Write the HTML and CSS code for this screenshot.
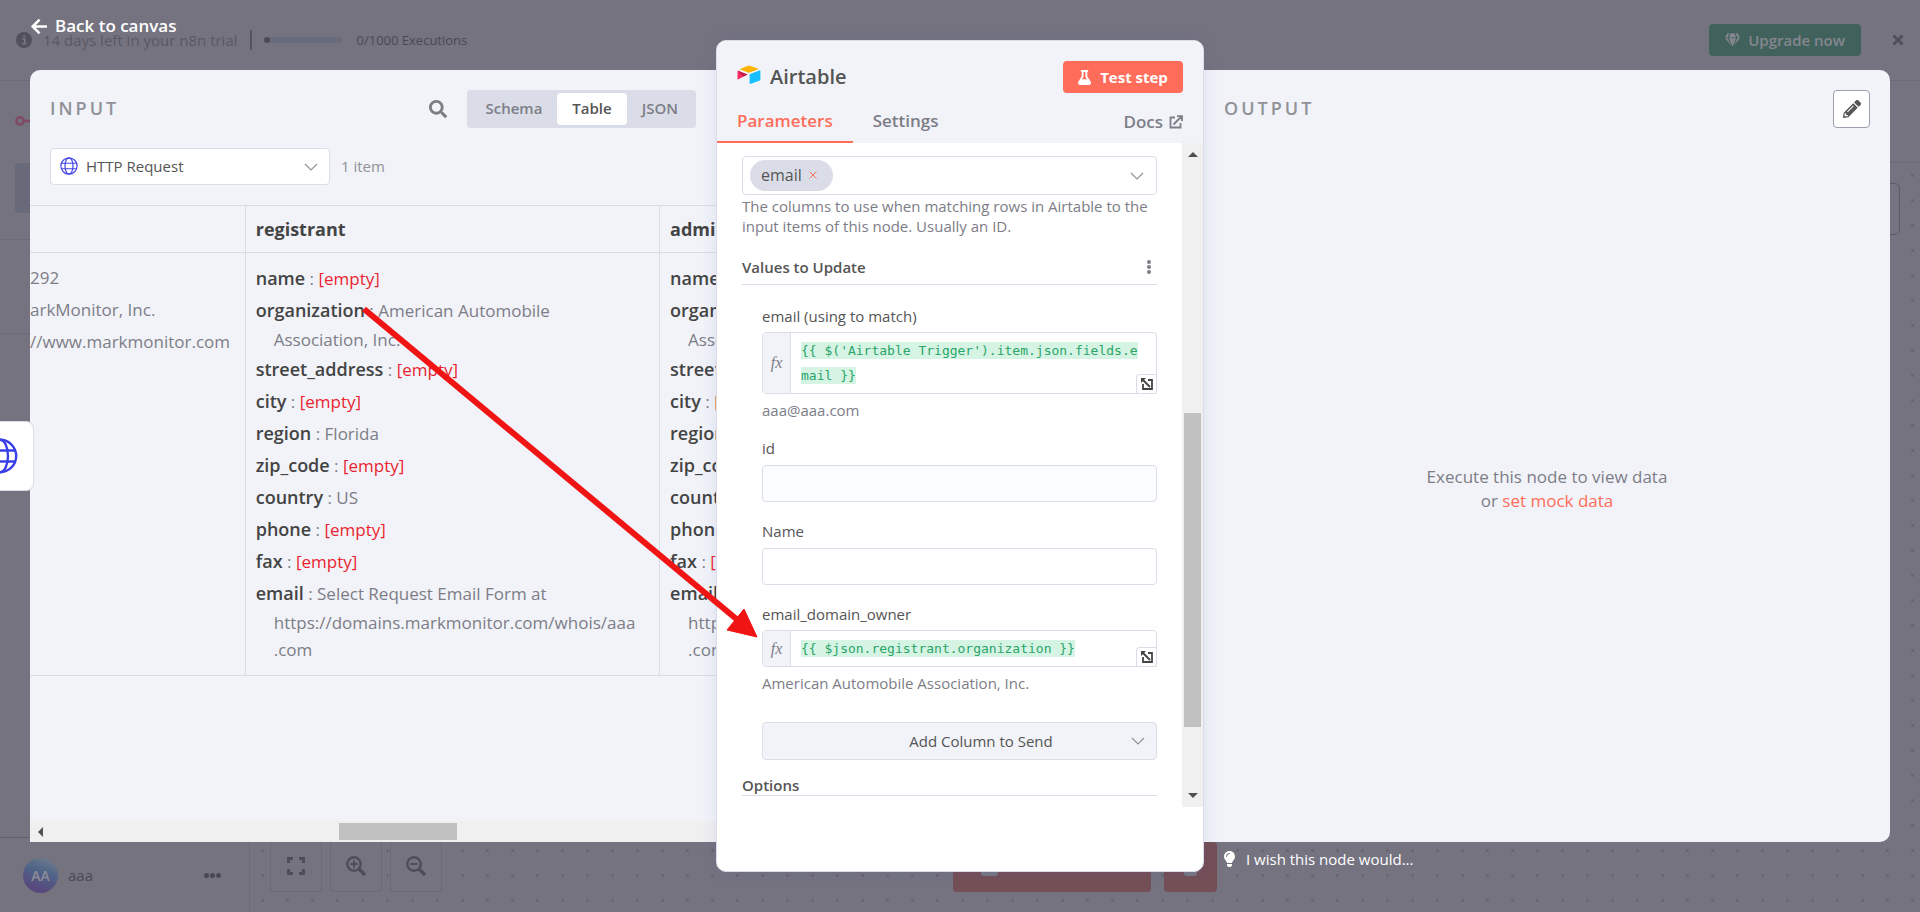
FILE: index.html
```
<!DOCTYPE html>
<html lang="en">
<head>
<meta charset="utf-8">
<title>Airtable - n8n</title>
<link rel="stylesheet" href="styles.css">
</head>
<body>
<svg class="defs" aria-hidden="true">
  <symbol id="globe" viewBox="0 0 36 36"><g fill="none" stroke="currentColor" stroke-width="2.4"><circle cx="18" cy="18" r="16.2"/><ellipse cx="18" cy="18" rx="8" ry="16.2"/><path d="M3 12.5h30M3 23.5h30"/></g></symbol>
  <symbol id="chevron" viewBox="0 0 14 8"><path d="M1 1l6 6 6-6" fill="none" stroke="currentColor" stroke-width="1.2"/></symbol>
  <symbol id="expand" viewBox="0 0 14 14"><path d="M3 3L10 10M3 7v5h9V3H8" fill="none" stroke="currentColor" stroke-width="1.8"/><path d="M1 1h5L1 6z" fill="currentColor"/></symbol>
</svg>

<div class="app">
  <header class="banner">
    <svg class="banner-info" viewBox="0 0 16 16"><circle cx="8" cy="8" r="8" fill="currentColor"/><path d="M6.200 6.800h2.600v4.400M6 11.600h4.200M7.200 4.100h1.900" stroke="#75737f" stroke-width="1.700" fill="none"/></svg>
    <span class="banner-text">14 days left in your n8n trial</span>
    <span class="banner-divider"></span>
    <span class="banner-bar"><i></i></span>
    <span class="banner-count">0/1000 Executions</span>
    <button class="upgrade"><svg viewBox="0 0 576 512"><path fill="currentColor" d="M485.500 0L576 160H474.900L405.700 0h79.800zm-128 0l69.200 160H149.300L218.500 0h139zm-267 0h79.800l-69.200 160H0L90.500 0zM0 192h100.700l123 251.700c1.500 3.100-2.700 5.900-5 3.300L0 192zm148.200 0h279.600l-137 318.200c-1 2.400-4.500 2.400-5.500 0L148.200 192zm204.100 251.700l123-251.700H576L357.300 446.900c-2.300 2.700-6.500-.1-5-3.200z"/></svg>Upgrade now</button>
    <button class="dismiss" aria-label="Dismiss"><svg viewBox="0 0 12 12"><path d="M1.500 1.500l9 9M10.500 1.500l-9 9" stroke="currentColor" stroke-width="3"/></svg></button>
  </header>
  <div class="workspace">
    <nav class="sidebar">
      <div class="brand"><svg viewBox="0 0 20 12"><circle cx="5" cy="6" r="3.600" fill="none" stroke="currentColor" stroke-width="2.600"/><path d="M9 6h11" stroke="currentColor" stroke-width="2.600"/></svg></div>
      <div class="side-top"><span class="side-item"></span></div>
      <div class="side-mid"></div>
      <div class="side-fill"></div>
      <div class="user">
        <span class="avatar">AA</span><span class="user-name">aaa</span>
        <button class="more" aria-label="User menu"><i></i><i></i><i></i></button>
      </div>
    </nav>
    <main class="canvas">
      <div class="canvas-head"></div>
      <div class="canvas-grid">
        <div class="canvas-box"></div>
        <div class="canvas-tools">
          <button class="tool" aria-label="Fit view"><svg viewBox="0 0 20 20"><path d="M2.500 7V2.500H7M13 2.500h4.500V7M17.500 13v4.500H13M7 17.500H2.500V13" fill="none" stroke="currentColor" stroke-width="3"/></svg></button>
          <button class="tool" aria-label="Zoom in"><svg viewBox="0 0 20 20"><g fill="none" stroke="currentColor"><circle cx="8" cy="8" r="6.700" stroke-width="2.400"/><path d="M13 13l6 6" stroke-width="3.400"/><path d="M4.500 8h7M8 4.500v7" stroke-width="2"/></g></svg></button>
          <button class="tool" aria-label="Zoom out"><svg viewBox="0 0 20 20"><g fill="none" stroke="currentColor"><circle cx="8" cy="8" r="6.700" stroke-width="2.400"/><path d="M13 13l6 6" stroke-width="3.400"/><path d="M4.500 8h7" stroke-width="2"/></g></svg></button>
        </div>
        <div class="canvas-run"><button class="run wide" aria-label="Test workflow"><i></i></button><button class="run" aria-label="Delete execution"><i></i></button></div>
      </div>
    </main>
  </div>
</div>

<div class="ndv">
  <div class="ndv-top"><button class="back"><svg viewBox="0 0 16 16"><path d="M9 1.500L2.500 8 9 14.500M2.500 8H16" fill="none" stroke="currentColor" stroke-width="2.400"/></svg>Back to canvas</button></div>
  <div class="ndv-grid">
    <section class="side input">
      <div class="pane">
        <div class="pane-head">
          <h2>INPUT</h2>
          <button class="search" aria-label="Search"><svg viewBox="0 0 512 512"><path fill="currentColor" d="M505 442.700L405.300 343c-4.500-4.500-10.600-7-17-7H372c27.600-35.300 44-79.700 44-128C416 93.100 322.900 0 208 0S0 93.100 0 208s93.100 208 208 208c48.300 0 92.700-16.400 128-44v16.300c0 6.400 2.500 12.500 7 17l99.700 99.700c9.400 9.400 24.600 9.400 33.900 0l28.300-28.300c9.400-9.400 9.400-24.600.1-34zM208 336c-70.700 0-128-57.200-128-128 0-70.700 57.200-128 128-128 70.700 0 128 57.200 128 128 0 70.700-57.200 128-128 128z"/></svg></button>
          <div class="views"><button>Schema</button><button class="on">Table</button><button>JSON</button></div>
        </div>
        <div class="source">
          <div class="picker">
            <svg class="picker-icon"><use href="#globe"/></svg>
            <select aria-label="Input node"><option>HTTP Request</option></select>
            <svg class="chev"><use href="#chevron"/></svg>
          </div>
          <span class="count">1 item</span>
        </div>
        <div class="table-wrap">
          <table>
            <thead><tr><th></th><th>registrant</th><th>administrative</th></tr></thead>
            <tbody><tr>
              <td class="cut"><p>292</p><p>arkMonitor, Inc.</p><p>//www.markmonitor.com</p></td>
              <td>
                <p><b>name</b> : <em>[empty]</em></p>
                <p><b>organization</b> : American Automobile<br>Association, Inc.</p>
                <p><b>street_address</b> : <em>[empty]</em></p>
                <p><b>city</b> : <em>[empty]</em></p>
                <p><b>region</b> : Florida</p>
                <p><b>zip_code</b> : <em>[empty]</em></p>
                <p><b>country</b> : US</p>
                <p><b>phone</b> : <em>[empty]</em></p>
                <p><b>fax</b> : <em>[empty]</em></p>
                <p><b>email</b> : Select Request Email Form at<br>https://domains.markmonitor.com/whois/aaa<br>.com</p>
              </td>
              <td>
                <p><b>name</b> : <em>[empty]</em></p>
                <p><b>organization</b> : American Automobile<br>Association, Inc.</p>
                <p><b>street_address</b> : <em>[empty]</em></p>
                <p><b>city</b> : <em>[empty]</em></p>
                <p><b>region</b> : Florida</p>
                <p><b>zip_code</b> : <em>[empty]</em></p>
                <p><b>country</b> : US</p>
                <p><b>phone</b> : <em>[empty]</em></p>
                <p><b>fax</b> : <em>[empty]</em></p>
                <p><b>email</b> : Select Request Email Form at<br>https://domains.markmonitor.com/whois/aaa<br>.com</p>
              </td>
            </tr></tbody>
          </table>
        </div>
        <div class="hbar"><i class="tri left"></i><span class="track"><i class="thumb"></i></span><i class="tri right"></i></div>
      </div>
    </section>

    <section class="node">
      <header class="node-head">
        <div class="node-title">
          <svg class="logo" viewBox="0 0 24 24"><path d="M2.500 4.200L11 .7q1-.4 2 0l8.800 3.300-8.900 3.500q-1 .4-2 0z" fill="#fcb400"/><path d="M12.600 9.300l10.200-4q.6-.2.600.4v9q0 .5-.5.700L13.100 19q-.5.200-.5-.4z" fill="#18bfff"/><path d="M.6 5.800q.3-.3.700-.1l9.200 3.800L.9 14.600q-.4.200-.4-.3z" fill="#f82b60"/><path d="M10.500 9.500L6.500 11.500.8 5.800z" fill="#ba1e45"/></svg>
          <h1>Airtable</h1>
          <button class="test"><svg viewBox="0 0 448 512"><path fill="currentColor" d="M437.200 403.500L320 215V64h8c13.300 0 24-10.700 24-24V24c0-13.300-10.700-24-24-24H120c-13.300 0-24 10.700-24 24v16c0 13.300 10.700 24 24 24h8v151L10.800 403.500C-18.500 450.600 15.300 512 70.900 512h306.200c55.700 0 89.400-61.500 60.100-108.500zM137.900 320l48.200-77.600c3.700-5.200 5.800-11.600 5.800-18.400V64h64v160c0 6.900 2.200 13.200 5.800 18.400l48.200 77.600h-172z"/></svg>Test step</button>
        </div>
        <nav class="tabs">
          <button class="tab on">Parameters</button><button class="tab">Settings</button>
          <a class="docs" href="#">Docs <svg viewBox="0 0 14 14"><path d="M6 2.500H1.500v10h10V8M4.500 9.500L12 2M8 1.200h5V6" fill="none" stroke="currentColor" stroke-width="1.800"/></svg></a>
        </nav>
      </header>
      <div class="node-body">
        <div class="params">
          <div class="multi">
            <span class="tag">email<button aria-label="Remove email"><svg viewBox="0 0 8 8"><path d="M.5.5l7 7M7.500.5l-7 7" stroke="currentColor"/></svg></button></span>
            <svg class="chev"><use href="#chevron"/></svg>
          </div>
          <p class="help">The columns to use when matching rows in Airtable to the input items of this node. Usually an ID.</p>
          <div class="section"><h3>Values to Update</h3><button class="dots" aria-label="Options"><i></i><i></i><i></i></button></div>
          <div class="fields">
            <div class="field expr-field">
              <span class="label" id="l1">email (using to match)</span>
              <div class="expr"><span class="fx">fx</span><div class="code" role="textbox" aria-labelledby="l1"><mark>{{ $('Airtable Trigger').item.json.fields.e<br>mail }}</mark></div><button class="open" aria-label="Open editor"><svg><use href="#expand"/></svg></button></div>
              <span class="result">aaa@aaa.com</span>
            </div>
            <div class="field"><label for="id">id</label><input id="id" class="muted" type="text"></div>
            <div class="field"><label for="name">Name</label><input id="name" type="text"></div>
            <div class="field expr-field">
              <span class="label" id="l2">email_domain_owner</span>
              <div class="expr"><span class="fx">fx</span><div class="code" role="textbox" aria-labelledby="l2"><mark>{{ $json.registrant.organization }}</mark></div><button class="open" aria-label="Open editor"><svg><use href="#expand"/></svg></button></div>
              <span class="result">American Automobile Association, Inc.</span>
            </div>
            <div class="add"><select aria-label="Add column"><option>Add Column to Send</option></select><svg class="chev"><use href="#chevron"/></svg></div>
          </div>
          <div class="section options"><h3>Options</h3></div>
        </div>
        <div class="vbar"><i class="tri up"></i><span class="track"><i class="thumb"></i></span><i class="tri down"></i></div>
      </div>
    </section>

    <section class="side output">
      <div class="pane">
        <div class="pane-head"><h2>OUTPUT</h2><button class="edit" aria-label="Edit output"><svg viewBox="0 0 512 512"><path fill="currentColor" d="M497.900 142.100l-46.100 46.100c-4.700 4.700-12.300 4.700-17 0l-111-111c-4.700-4.700-4.700-12.300 0-17l46.100-46.100c18.700-18.700 49.100-18.700 67.900 0l60.100 60.100c18.800 18.700 18.800 49.100 0 67.900zM284.200 99.800L21.600 362.400.4 483.900c-2.900 16.400 11.400 30.600 27.800 27.800l121.500-21.300 262.600-262.600c4.700-4.700 4.700-12.300 0-17l-111-111c-4.800-4.700-12.400-4.700-17.100 0zM124.100 339.900c-5.500-5.500-5.500-14.300 0-19.800l154-154c5.500-5.500 14.300-5.500 19.800 0s5.500 14.300 0 19.800l-154 154c-5.500 5.500-14.300 5.500-19.800 0zM88 424h48v36.300l-64.500 11.300-31.100-31.100L51.700 376H88v48z"/></svg></button></div>
        <p class="empty">Execute this node to view data<br>or <a href="#">set mock data</a></p>
      </div>
      <button class="wish"><svg viewBox="0 0 352 512"><path fill="currentColor" d="M96.060 454.350c.01 6.290 1.870 12.450 5.360 17.690l17.090 25.690a31.990 31.990 0 0 0 26.640 14.280h61.710a31.990 31.990 0 0 0 26.640-14.280l17.090-25.690a31.989 31.989 0 0 0 5.360-17.690l.04-38.350H96.010l.05 38.350zM0 176c0 44.370 16.450 84.850 43.560 115.780 16.520 18.850 42.360 58.230 52.210 91.450.04.260.07.520.11.780h160.240c.04-.260.07-.510.11-.780 9.850-33.220 35.690-72.600 52.210-91.450C335.550 260.850 352 220.370 352 176 352 78.610 272.910-.3 175.450 0 73.440.31 0 82.970 0 176zm176-80c-44.110 0-80 35.890-80 80 0 8.840-7.160 16-16 16s-16-7.160-16-16c0-61.760 50.240-112 112-112 8.840 0 16 7.160 16 16s-7.160 16-16 16z"/></svg>I wish this node would...</button>
    </section>
  </div>
  <button class="prev-node" aria-label="HTTP Request"><svg><use href="#globe"/></svg></button>
  <svg class="arrow" width="400" height="340" viewBox="0 0 400 340" aria-hidden="true"><path d="M4 4L380 317" stroke="#f01414" stroke-width="6"/><path d="M397 332L384 304 367 325z" fill="#f01414" stroke="#f01414"/></svg>
</div>
</body>
</html>
```
FILE: styles.css
```
* { box-sizing: border-box; }
body { margin: 0; height: 100vh; overflow: hidden; position: relative; background: #75737f; font: 16px/20px "Open Sans", "Noto Sans", sans-serif; color: #555; }
button { font: inherit; color: inherit; border: 0; padding: 0; margin: 0; background: none; cursor: pointer; }
h1, h2, h3, p { margin: 0; }
svg { display: block; flex: none; }
.defs { position: absolute; width: 0; height: 0; }

/* workflow editor behind the dialog */
.app { height: 100%; display: flex; flex-direction: column; color: #52505d; }
.banner { height: 81px; display: flex; align-items: center; padding: 0 16px; border-bottom: 1px solid #696a7b; }
.banner-info { width: 16px; height: 16px; margin-right: 11px; }
.banner-text { color: #5a5864; font-size: 15px; }
.banner-divider { width: 2px; height: 20px; background: #54535f; margin: 0 12px; }
.banner-bar { width: 78px; height: 6px; border-radius: 3px; background: #696a7a; margin-right: 15px; }
.banner-bar i { display: block; width: 6px; height: 6px; border-radius: 3px; background: #4c4a58; }
.banner-count { font-size: 13px; color: #4a4854; }
.upgrade { margin-left: auto; height: 32px; padding: 0 16px; border-radius: 4px; background: #41625c; color: #85868f; font-size: 15px; font-weight: 600; display: flex; align-items: center; gap: 8px; }
.upgrade svg { width: 15px; height: 14px; }
.dismiss { margin-left: 31px; }
.dismiss svg { width: 12px; height: 12px; }
.workspace { flex: 1; display: flex; min-height: 0; }
.sidebar { width: 250px; flex: none; border-right: 1px solid #6b6a7a; display: flex; flex-direction: column; }
.brand { height: 82px; padding: 34px 15px 0; color: #804c65; }
.brand svg { width: 20px; height: 12px; }
.side-top { height: 77px; padding-left: 15px; border-bottom: 1px solid #696a7b; }
.side-item { display: block; height: 50px; border-radius: 4px; background: #686a79; }
.side-mid { height: 94px; border-bottom: 1px solid #696a7b; }
.side-fill { flex: 1; }
.user { height: 75px; border-top: 1px solid #63616f; display: flex; align-items: center; padding: 0 28px 0 23px; gap: 10px; }
.avatar { width: 35px; height: 35px; border-radius: 50%; background: linear-gradient(200deg, #76808e, #4f6488 40%, #57497c 80%); color: #8d8c97; font-size: 14px; font-weight: 600; line-height: 35px; text-align: center; }
.user-name { font-size: 15px; color: #4c4a54; }
.more { margin-left: auto; display: flex; gap: 1px; }
.more i { width: 5px; height: 5px; border-radius: 50%; background: #4a4855; }
.canvas { flex: 1; min-width: 0; display: flex; flex-direction: column; }
.canvas-head { height: 82px; border-bottom: 1px solid #696a7b; }
.canvas-grid { flex: 1; position: relative; background-image: radial-gradient(circle, #666472 1px, transparent 2px); background-size: 25px 25px; }
.canvas-box { position: absolute; right: 20px; top: 20px; width: 60px; height: 52px; border: 1px solid #5c5a66; border-radius: 5px; }
.canvas-tools { position: absolute; left: 20px; bottom: 20px; display: flex; gap: 8px; }
.tool { width: 52px; height: 52px; border: 1px solid #696978; border-radius: 4px; background: #75737f; color: #4f4d5a; display: grid; place-items: center; }
.tool svg { width: 20px; height: 20px; }
.canvas-run { position: absolute; left: 42%; right: 42%; bottom: 20px; display: flex; justify-content: center; gap: 13px; }
.run { width: 53px; height: 50px; flex: none; border-radius: 4px; background: #744f56; display: flex; align-items: flex-end; padding: 0 20px 16px; }
.run.wide { width: 198px; padding-left: 28px; }
.run i { width: 14px; height: 14px; border-radius: 3px; background: #777885; }
.run.wide i { width: 17px; }

/* node dialog */
.ndv { position: absolute; inset: 0; display: flex; flex-direction: column; padding: 0 30px 40px; }
.ndv-top { height: 40px; display: flex; padding-top: 12px; }
.back { height: 28px; display: flex; align-items: center; gap: 8px; color: #fff; font-size: 17px; font-weight: 600; }
.back svg { width: 17px; height: 17px; }
.ndv-grid { flex: 1; min-height: 0; display: grid; grid-template-columns: minmax(0, 1fr) 488px minmax(0, 1fr); }
.side { display: flex; flex-direction: column; min-width: 0; min-height: 0; padding: 30px 0; }
.output { padding-bottom: 0; }
.pane { flex: 1; min-height: 0; display: flex; flex-direction: column; overflow: hidden; background: #f1f3f8; }
.input .pane { border-radius: 10px 0 0 0; }
.output .pane { border-radius: 0 10px 10px 0; }
.pane-head { display: flex; align-items: center; padding: 20px 20px 0; }
.pane-head h2 { font-size: 18px; font-weight: 600; line-height: 24px; letter-spacing: 3px; color: #909298; margin: 0 auto 2px 0; }
.search { color: #7d7d87; margin-right: 20px; }
.search svg { width: 18px; height: 18px; }
.views { height: 38px; padding: 3px; border-radius: 4px; background: #dadde7; display: flex; }
.views button { padding: 0 15px 2px; border-radius: 4px; font-size: 15px; font-weight: 600; color: #7d7d87; }
.views .on { background: #fff; color: #555; }
.source { display: flex; align-items: center; padding: 20px 20px 0; gap: 11px; }
.picker, .add { position: relative; }
.picker { width: 280px; }
.picker select { appearance: none; width: 100%; height: 37px; padding: 0 35px 2px; border: 1px solid #dadde7; border-radius: 4px; background: #fff; font: inherit; font-size: 15px; color: #555; display: block; }
.picker-icon { position: absolute; left: 10px; top: 9px; width: 18px; height: 18px; color: #4347e6; }
.chev { width: 14px; height: 8px; color: #909298; position: absolute; right: 12px; top: 15px; }
.count { font-size: 15px; color: #909298; padding-bottom: 2px; }
.table-wrap { flex: 1; min-height: 0; overflow: hidden; margin-top: 20px; }
table { border-collapse: collapse; table-layout: fixed; width: 1044px; border-top: 1px solid #dadde7; border-bottom: 1px solid #dadde7; font-size: 17px; line-height: 27px; color: #7d7d87; white-space: nowrap; }
th { width: 414px; height: 47px; padding: 0 10px; text-align: left; font-size: 18px; font-weight: 700; color: #444; border-left: 1px solid #dadde7; border-bottom: 1px solid #dadde7; }
th:first-child { width: 215px; border-left: 0; }
td { vertical-align: top; padding: 9px 10px 12px; border-left: 1px solid #dadde7; }
td.cut { padding-left: 0; padding-right: 0; border-left: 0; }
td p { padding-left: 18px; text-indent: -18px; }
td.cut p { padding-left: 0; text-indent: 0; line-height: 32px; }
td b { display: inline-block; text-indent: 0; font-size: 18px; line-height: 32px; font-weight: 600; color: #444; }
td em { font-style: normal; color: #ea1f30; }
.hbar { height: 21px; flex: none; background: #f0f0f0; display: flex; align-items: center; padding: 0 8px; }
.hbar .track { flex: 1; padding: 0 296px; }
.hbar .thumb { display: block; width: 118px; height: 17px; background: #c1c1c1; }
.tri { width: 0; height: 0; border: 5px solid transparent; flex: none; }
.tri.left { border-left-width: 0; border-right-color: #505050; }
.tri.right { border-right-width: 0; border-left-color: #505050; }
.tri.up { border-top-width: 0; border-bottom-color: #505050; }
.tri.down { border-bottom-width: 0; border-top-color: #505050; }
.empty { margin: auto; padding-top: 8px; text-align: center; font-size: 17px; line-height: 24px; color: #7d7d87; }
.empty a { color: #ff6d5a; text-decoration: none; }
.edit { width: 37px; height: 38px; border: 1px solid #9a9fae; border-radius: 4px; background: #fff; color: #555; display: grid; place-items: center; }
.edit svg { width: 18px; height: 18px; }
.wish { height: 30px; margin: 2px 0 -2px 20px; align-self: flex-start; display: flex; align-items: center; gap: 11px; color: #fff; font-size: 15px; font-weight: 500; }
.wish svg { width: 11px; height: 16px; }

.node { position: relative; z-index: 1; display: flex; flex-direction: column; min-height: 0; background: #fff; border: 1px solid #dadde7; border-radius: 10px; box-shadow: 0 0 16px rgba(68, 80, 180, .12); overflow: hidden; }
.node-head { background: #f1f3f8; }
.node-title { display: flex; align-items: center; padding: 20px 20px 0; }
.logo { width: 24px; height: 24px; }
h1 { font-size: 20px; line-height: 28px; font-weight: 600; color: #555; margin: 0 auto 0 9px; }
.test { width: 120px; height: 32px; border-radius: 4px; background: #ff6d5a; color: #fff; font-size: 15px; font-weight: 700; display: flex; align-items: center; justify-content: center; gap: 9px; }
.test svg { width: 13px; height: 15px; }
.tabs { display: flex; height: 50px; align-items: stretch; padding-right: 20px; font-size: 17px; font-weight: 600; color: #7d7d87; }
.tab { padding: 8px 20px 0; border-bottom: 2px solid transparent; }
.tab.on { color: #ff6d5a; border-color: #ff6d5a; }
.docs { margin-left: auto; display: flex; align-items: center; gap: 6px; padding-top: 7px; color: inherit; text-decoration: none; }
.docs svg { width: 14px; height: 14px; }
.node-body { flex: 1; min-height: 0; display: flex; margin-bottom: 64px; }
.params { flex: 1; min-width: 0; overflow: hidden; padding: 13px 25px 0; font-size: 15px; }
.multi { position: relative; height: 39px; border: 1px solid #dadde7; border-radius: 4px; padding: 3px 7px; }
.tag { display: inline-flex; align-items: center; gap: 7px; height: 31px; padding: 0 16px 1px 11px; border-radius: 16px; background: #dadde7; font-size: 16px; color: #555; }
.tag svg { width: 8px; height: 8px; color: #ff6d5a; }
.help { color: #7d7d87; padding-top: 1px; }
.section { display: flex; justify-content: space-between; align-items: center; border-bottom: 1px solid #dadde7; height: 49px; padding: 14px 6px 0 0; }
.section h3 { font-size: 15px; font-weight: 600; color: #555; }
.dots { display: grid; gap: 1px; }
.dots i { width: 4px; height: 4px; border-radius: 50%; background: #7d7d87; }
.fields { padding: 21px 0 0 20px; display: flex; flex-direction: column; }
.field { display: flex; flex-direction: column; gap: 7px; margin-bottom: 19px; }
.field input { width: 100%; height: 37px; border: 1px solid #dadde7; border-radius: 4px; background: #fff; }
.field .muted { background: #fbfcfe; }
.expr-field { gap: 6px; margin-bottom: 18px; }
.expr { position: relative; display: flex; border: 1px solid #dadde7; border-radius: 4px 4px 0 4px; overflow: hidden; }
.fx { width: 28px; flex: none; display: grid; place-items: center; background: #f1f3f8; border-right: 1px solid #dadde7; font: italic 16px/20px "Liberation Serif", serif; color: #7d7d87; }
.code { flex: 1; min-width: 0; padding: 5px 0 5px 10px; font: 13px/25px "DejaVu Sans Mono", monospace; white-space: nowrap; }
.code mark { background: #d6f4e4; color: #29a568; padding: 1px 0; }
.open { position: absolute; right: 0; bottom: 0; width: 20px; height: 19px; background: #fff; border: solid #dadde7; border-width: 1px 0 0 1px; border-radius: 4px 0 0 0; display: grid; place-items: center; color: #444; }
.open svg { width: 14px; height: 14px; }
.result { color: #7d7d87; }
.add { margin-top: 11px; }
.add select { appearance: none; width: 100%; height: 38px; padding: 0 0 0 43px; border: 1px solid #dadde7; border-radius: 4px; background: #f1f3f8; font: inherit; color: #555; text-align: center; text-align-last: center; display: block; }
.options { height: 36px; padding-top: 14px; }
.vbar { width: 21px; flex: none; background: #f0f0f0; display: flex; flex-direction: column; align-items: center; padding: 9px 0; }
.vbar .track { flex: 1; padding: 256px 0 66px; display: flex; }
.vbar .thumb { display: block; width: 17px; background: #c1c1c1; }
.prev-node { position: absolute; z-index: 2; left: 0; top: 50%; width: 34px; height: 70px; margin-top: -35px; border: 1px solid #dadde7; border-left: 0; border-radius: 0 8px 8px 0; background: #fff; color: #3b40e6; overflow: hidden; }
.prev-node svg { width: 36px; height: 36px; margin-left: -18px; }
.arrow { position: absolute; z-index: 3; left: 360px; top: 305px; pointer-events: none; }
```
